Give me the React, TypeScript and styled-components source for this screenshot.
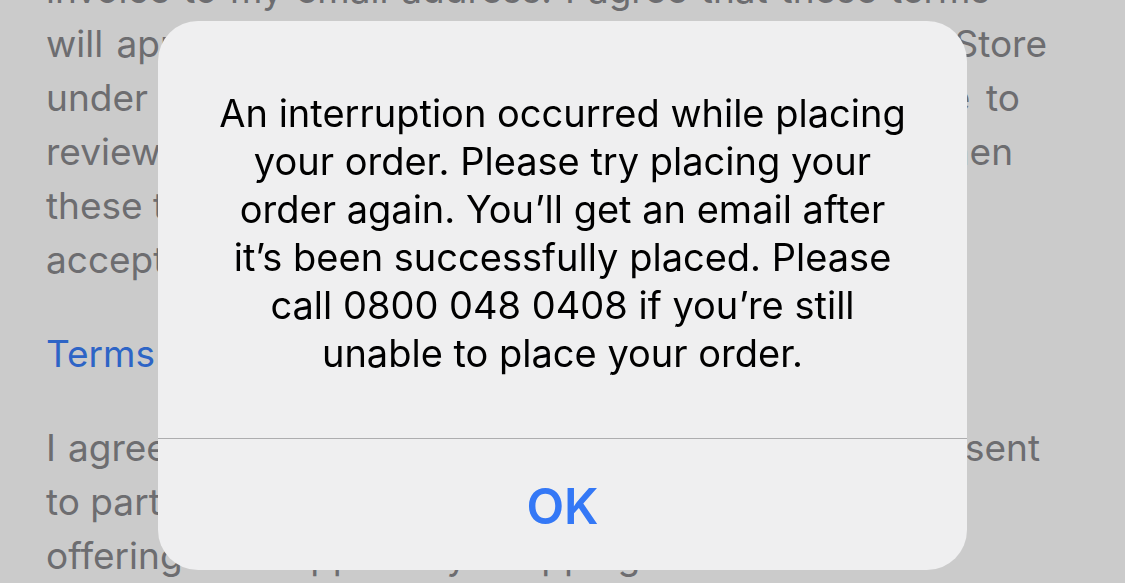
import styled, { createGlobalStyle } from 'styled-components';

const GlobalStyle = createGlobalStyle`
  html, body {
    margin: 0;
    padding: 0;
    background: #cbcbcb;
    overflow: hidden;
  }
  body {
    font-family: Inter, 'Noto Sans', 'Liberation Sans', sans-serif;
    -webkit-font-smoothing: antialiased;
  }
`;

type BgLine = { text: string; width?: number };
type Para = { lines: BgLine[]; link?: boolean };

// width = where the line has to end, so the words peeking out past the alert sit right
const paragraphs: Para[] = [
  {
    lines: [
      { text: 'invoice to my email address. I agree that these terms', width: 944 },
      { text: 'will apply to any purchases I make from the Apple Store', width: 1001 },
      { text: 'under this account, and that I will have the chance to', width: 974 },
      { text: 'review and accept any changes made to them when', width: 967 },
      { text: 'these terms are updated before I am asked to' },
      { text: 'accept them again.' },
    ],
  },
  { lines: [{ text: 'Terms and Conditions' }], link: true },
  {
    lines: [
      { text: 'I agree that Apple may share my details and my consent', width: 994 },
      { text: 'to partners who help provide the services they are' },
      { text: 'offering and support my shopping' },
    ],
  },
];

const message = [
  'An interruption occurred while placing',
  'your order. Please try placing your',
  'order again. You\u2019ll get an email after',
  'it\u2019s been successfully placed. Please',
  'call 0800 048 0408 if you\u2019re still',
  'unable to place your order.',
];

const App = () => {
  return (
    <>
      <GlobalStyle />
      <Page>
        {paragraphs.map((p, i) => (
          <Paragraph key={i} $link={p.link}>
            {p.lines.map((l, j) => (
              <Line key={j} $width={l.width}>
                {l.text}
              </Line>
            ))}
          </Paragraph>
        ))}
      </Page>

      <Overlay>
        <Alert role="alertdialog">
          <Message>
            {message.map((l, i) => (
              <MessageLine key={i}>{l}</MessageLine>
            ))}
          </Message>
          <Divider />
          <ActionButton type="button">OK</ActionButton>
        </Alert>
      </Overlay>
    </>
  );
};

const Page = styled.div`
  display: flex;
  flex-direction: column;
  gap: 40px;
  padding: 0 46px;
  margin-top: -37px;
`;

const Paragraph = styled.div<{ $link?: boolean }>`
  display: flex;
  flex-direction: column;
  align-items: flex-start;
  font-size: 37px;
  line-height: 54px;
  color: ${props => (props.$link ? '#2d64c6' : '#6d6d70')};
`;

const Line = styled.div<{ $width?: number }>`
  white-space: nowrap;
  width: ${props => (props.$width ? `${props.$width}px` : 'auto')};
  text-align-last: ${props => (props.$width ? 'justify' : 'auto')};
`;

const Overlay = styled.div`
  position: fixed;
  inset: 0;
  display: flex;
  justify-content: center;
  align-items: flex-start;
  padding-top: 21px;
`;

const Alert = styled.div`
  width: 809px;
  height: 549px;
  border-radius: 40px;
  background: #efeff0;
  display: flex;
  flex-direction: column;
  overflow: hidden;
`;

const Message = styled.div`
  padding: 68px 20px 61px;
  display: flex;
  flex-direction: column;
  align-items: center;
  font-size: 38px;
  line-height: 48px;
  color: #000;
`;

const MessageLine = styled.div`
  white-space: nowrap;
`;

const Divider = styled.div`
  height: 1px;
  background: #adadaf;
`;

const ActionButton = styled.button`
  flex: 1;
  border: none;
  background: transparent;
  font-family: Inter, 'Noto Sans', 'Liberation Sans', sans-serif;
  font-size: 49px;
  font-weight: 600;
  color: #3478f6;
  padding: 4px 0 0;
  cursor: pointer;
`;

export default App;
